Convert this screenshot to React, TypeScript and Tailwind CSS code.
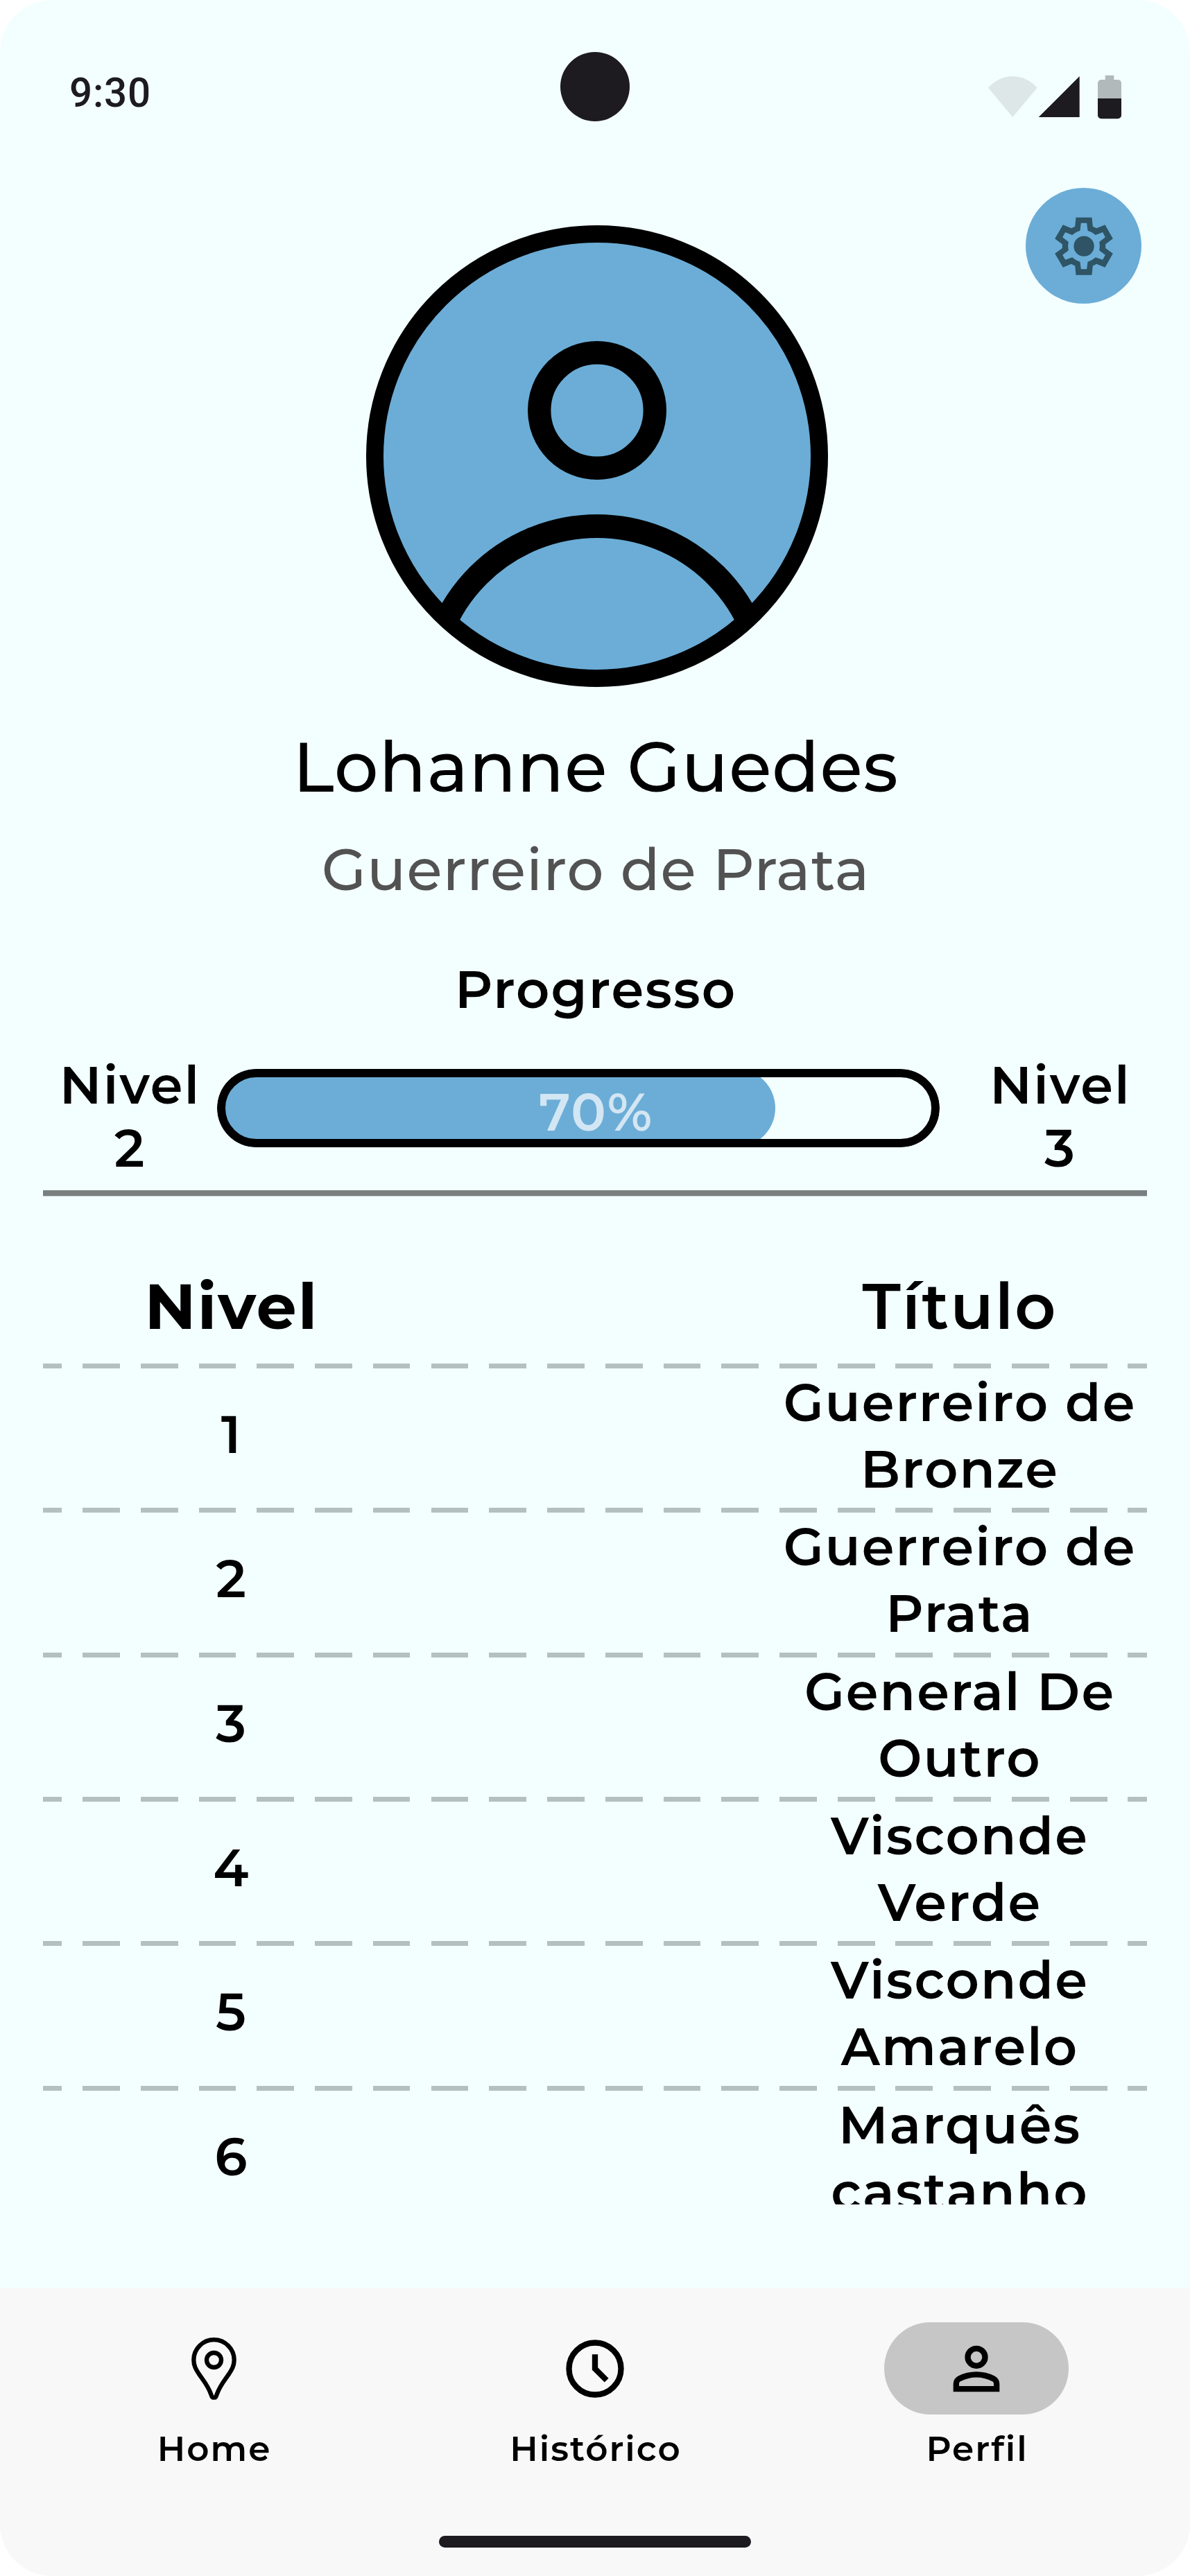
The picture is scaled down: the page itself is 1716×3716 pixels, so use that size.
function StatusBar() {
  return (
    <header className="grid h-[217px] grid-cols-[1fr_100px_1fr] items-start">
      <span className="mt-[104px] pl-[100px] font-['Roboto'] text-[58.3px] leading-[60px] font-medium tracking-[0.8px] text-[#1d1b20]">
        9:30
      </span>
      <span className="mt-[75px] size-[100px] rounded-full bg-[#1d1b20]" />
      <svg className="mt-[108px] mr-[99px] h-[64px] w-[192px] justify-self-end" viewBox="0 0 192 64" fill="none">
        <path d="M0 18.5C20-3.5 50.7-3.5 70.7 18.5L35.3 61Z" fill="#dde7e7" />
        <path d="M72.7 61H131.7V2Z" fill="#1d1b20" />
        <path d="M168.7 0.7H181.3V7H187a5 5 0 0 1 5 5V34H158V12a5 5 0 0 1 5-5H168.7Z" fill="#b2b9bb" />
        <path d="M158 34H192V58.3a5 5 0 0 1-5 5H163a5 5 0 0 1-5-5Z" fill="#1d1b20" />
      </svg>
    </header>
  );
}

function GearIcon() {
  return (
    <svg className="size-[84px]" viewBox="421.5 757 252 252">
      <path
        fill="#2e5465"
        fillRule="evenodd"
        d="M513 759H582L586 798Q594 801 602 806L639 791L673 851L641 875V892L673 915L639 975L602 960Q594 965 586 968L582 1008H513L509 968Q501 965 493 960L457 975L422 915L454 892V875L422 851L457 791L493 806Q501 801 509 798ZM535 783L531 816Q512 821 497 835L467 823L455 845L481 865Q477 883 481 902L455 921L467 942L497 932Q512 946 531 951L535 983H560L564 951Q583 946 598 932L629 942L640 921L614 902Q618 883 614 865L640 845L629 823L598 835Q583 821 564 816L560 783Z"
      />
      <circle cx="547.7" cy="883.5" r="44" fill="#2e5465" />
    </svg>
  );
}

function Avatar() {
  return (
    <svg className="mt-[108px] size-[666px]" viewBox="0 0 666 666" fill="none">
      <defs>
        <clipPath id="avatar-disc">
          <circle cx="333" cy="333" r="330" />
        </clipPath>
      </defs>
      <circle cx="333" cy="333" r="331" fill="#6badd7" />
      <g stroke="#000">
        <circle cx="333" cy="267" r="83.3" strokeWidth="33.4" />
        <circle cx="333" cy="676" r="242" strokeWidth="34" clipPath="url(#avatar-disc)" />
        <circle cx="333" cy="333" r="320.5" strokeWidth="25" />
      </g>
    </svg>
  );
}

function Progress() {
  return (
    <div className="mx-[62px] mt-[46px] flex h-[183px] items-start text-[75px] leading-[91.5px] font-semibold tracking-[2.08px]">
      <div className="flex w-[251px] flex-col items-center pt-[0.6px]">
        <span>Nivel</span>
        <span>2</span>
      </div>
      <div className="relative mt-[23px] h-[112.5px] w-[1041.5px] overflow-hidden rounded-full">
        <div className="h-full w-[804.5px] rounded-full bg-[#6badd7]" />
        <div className="absolute inset-0 rounded-full border-[12.5px] border-black" />
        <div className="absolute inset-0 flex items-center justify-center pt-[13px] pl-[52px] text-[#d3e6f3]">70%</div>
      </div>
      <div className="ml-auto flex w-[250px] flex-col items-center pt-[0.6px]">
        <span>Nivel</span>
        <span>3</span>
      </div>
    </div>
  );
}

const levels = [
  { level: 1, lines: ['Guerreiro de', 'Bronze'] },
  { level: 2, lines: ['Guerreiro de', 'Prata'] },
  { level: 3, lines: ['General De', 'Outro'] },
  { level: 4, lines: ['Visconde', 'Verde'] },
  { level: 5, lines: ['Visconde', 'Amarelo'] },
  { level: 6, lines: ['Marquês', 'castanho'] },
];

function LevelTable() {
  return (
    <section className="mx-[62px] tracking-[2.08px]">
      <div className="grid grid-cols-[544px_1fr_540px] pt-[75px] text-center text-[91.67px] leading-[166px]">
        <div className="font-bold">Nivel</div>
        <div className="col-start-3 font-semibold">Título</div>
      </div>
      <div className="h-[1213px] overflow-hidden">
        {levels.map(({ level, lines }) => (
          <div key={level} className="h-[208.33px]">
            <div className="h-[7px] bg-[repeating-linear-gradient(90deg,#b4bfbf_0_27px,transparent_27px_57px,#b4bfbf_57px_83.75px)]" />
            <div className="grid grid-cols-[544px_1fr_540px] pt-[1px] text-center text-[75px] leading-[96px] font-semibold">
              <div className="leading-[188px]">{level}</div>
              <div className="col-start-3 flex flex-col">
                {lines.map((line) => (
                  <span key={line} className="whitespace-nowrap">
                    {line}
                  </span>
                ))}
              </div>
            </div>
          </div>
        ))}
      </div>
    </section>
  );
}

function PinIcon() {
  return (
    <svg className="h-[90px] w-[65px]" viewBox="108 96 194 270" fill="none" stroke="#000" strokeWidth="19" strokeLinejoin="round">
      <path d="M205 105.5C157 105.5 117.5 145 117.5 192.5C117.5 218 127 234 141 255C160 283 179 304 192 341C196 352 197 356 205 356C213 356 214 352 218 341C231 304 250 283 269 255C283 234 292.5 218 292.5 192.5C292.5 145 253 105.5 205 105.5Z" />
      <circle cx="205" cy="193.5" r="31.5" />
    </svg>
  );
}

function ClockIcon() {
  return (
    <svg className="size-[100px]" viewBox="0 0 24 24">
      <circle cx="12" cy="12" r="9" fill="none" stroke="#000" strokeWidth="2" />
      <path d="m15.3 16.7 1.4-1.4-3.7-3.7V7h-2v5.4Z" />
    </svg>
  );
}

function PersonIcon() {
  return (
    <svg className="size-[100px]" viewBox="0 0 24 24">
      <path d="M12 12q-1.65 0-2.825-1.175Q8 9.65 8 8q0-1.65 1.175-2.825Q10.35 4 12 4q1.65 0 2.825 1.175Q16 6.35 16 8q0 1.65-1.175 2.825Q13.65 12 12 12Zm-8 8v-2.8q0-.85.438-1.563.437-.712 1.162-1.087 1.55-.775 3.15-1.163Q10.35 13 12 13t3.25.387q1.6.388 3.15 1.163.725.375 1.162 1.087Q20 16.35 20 17.2V20Zm2-2h12v-.8q0-.275-.137-.5-.138-.225-.363-.35-1.35-.675-2.725-1.013Q13.4 15 12 15t-2.775.337Q7.85 15.675 6.5 16.35q-.225.125-.362.35-.138.225-.138.5Zm6-8q.825 0 1.413-.588Q14 8.825 14 8t-.587-1.412Q12.825 6 12 6q-.825 0-1.412.588Q10 7.175 10 8t.588 1.412Q11.175 10 12 10Z" />
    </svg>
  );
}

const tabs = [
  { name: 'Home', icon: <PinIcon />, pill: '' },
  { name: 'Histórico', icon: <ClockIcon />, pill: '' },
  { name: 'Perfil', icon: <PersonIcon />, pill: 'bg-[#c6c6c6]' },
];

function BottomNav() {
  return (
    <footer className="mt-auto flex h-[415px] flex-col items-center bg-[#f8f8f8] pt-[49px]">
      <nav className="grid w-[1650px] grid-cols-3">
        {tabs.map((tab) => (
          <div key={tab.name} className="flex flex-col items-center">
            <div className={`flex h-[133px] w-[266px] items-center justify-center rounded-full ${tab.pill}`}>{tab.icon}</div>
            <span className="mt-[25px] ml-[2px] text-[50px] leading-[50px] font-semibold tracking-[2px]">{tab.name}</span>
          </div>
        ))}
      </nav>
      <div className="mt-[100px] h-[17px] w-[450px] rounded-full bg-[#1d1b20]" />
    </footer>
  );
}

export default function App() {
  return (
    <main className="flex h-[3716px] w-[1716px] flex-col overflow-hidden rounded-[75px] bg-[#f3ffff] font-['Montserrat','Inter',sans-serif] text-black">
      <StatusBar />
      <section className="grid grid-cols-[528px_666px_1fr] items-start">
        <div className="col-start-2">
          <Avatar />
        </div>
        <button className="mt-[54px] mr-[70px] flex size-[167px] items-center justify-center justify-self-end rounded-full bg-[#6badd7]">
          <GearIcon />
        </button>
      </section>
      <div className="flex flex-col items-center pl-[2px]">
        <h1 className="mt-[65px] text-[100px] leading-[100px] font-medium tracking-[0.96px]">Lohanne Guedes</h1>
        <p className="mt-[53px] text-[83.33px] leading-[90px] font-medium tracking-[0.96px] text-[#525252]">Guerreiro de Prata</p>
        <h2 className="mt-[83px] text-[75px] leading-[91px] font-semibold tracking-[2.08px]">Progresso</h2>
      </div>
      <Progress />
      <hr className="mx-[62px] mt-[15px] h-[9px] border-0 border-b border-[#c3cbcb] bg-[#797f7f]" />
      <LevelTable />
      <BottomNav />
    </main>
  );
}
